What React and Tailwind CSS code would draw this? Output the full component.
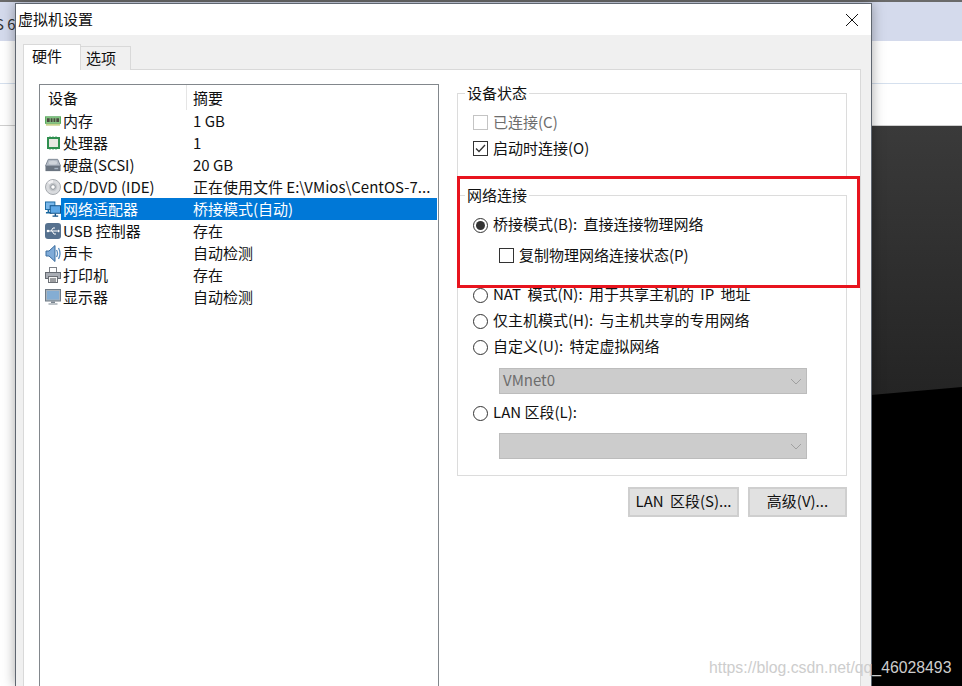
const FONT = { fontFamily: '"Noto Sans CJK SC", "Noto Sans", sans-serif' }

function MemIcon() {
  return (
    <svg width="17" height="10" viewBox="0 0 17 10">
      <rect x="0" y="0" width="17" height="8" fill="#58a85c" />
      <rect x="1" y="1" width="15" height="6" fill="#8cc98a" />
      <path d="M2 2h3v4H2zM6 2h2v4H6zM9 2h2v4H9zM12 2h3v4h-3z" fill="#4a4a3f" />
      <path d="M1 8h15v2H1z" fill="#c6d28a" />
    </svg>
  )
}
function CpuIcon() {
  return (
    <svg width="13" height="14" viewBox="0 0 13 14">
      <rect x="0" y="1" width="13" height="12" fill="#2f8f4f" />
      <rect x="2" y="3" width="9" height="8" fill="#e8e8e2" />
      <path d="M3 0v1M6 0v1M9 0v1M3 13v1M6 13v1M9 13v1" stroke="#6fb186" />
    </svg>
  )
}
function DiskIcon() {
  return (
    <svg width="17" height="14" viewBox="0 0 17 14">
      <path d="M3.500 1h10l3 7H.500z" fill="#b5bcc6" stroke="#7d8794" />
      <ellipse cx="8.500" cy="4.500" rx="4.500" ry="2" fill="#cfd4da" />
      <rect x="0.500" y="8" width="16" height="5.500" fill="#6a7480" />
      <rect x="10" y="10" width="4" height="1.500" fill="#a4b2c0" />
    </svg>
  )
}
function CdIcon() {
  return (
    <svg width="16" height="16" viewBox="0 0 16 16">
      <circle cx="8" cy="8" r="7.500" fill="#d9dbde" stroke="#a6aaaf" />
      <path d="M8 8L2.500 3.500A7 7 0 0 1 8 1z" fill="#f2f2f4" />
      <circle cx="8" cy="8" r="4.200" fill="#c4c7cb" />
      <circle cx="8" cy="8" r="2.300" fill="#fff" stroke="#8f959b" />
    </svg>
  )
}
function NetIcon() {
  return (
    <svg width="17" height="17" viewBox="0 0 17 17">
      <rect x="0.500" y="0.500" width="10" height="8" fill="#79b7ea" stroke="#16669f" />
      <path d="M1 12h6M3.500 9v3" stroke="#16669f" strokeWidth="1.500" />
      <rect x="5.500" y="4.500" width="11" height="8" fill="#5ea8e6" stroke="#0f4f85" />
      <path d="M8 15.500h6M11 13v2" stroke="#0f4f85" strokeWidth="1.500" />
    </svg>
  )
}
function UsbIcon() {
  return (
    <svg width="16" height="16" viewBox="0 0 16 16">
      <rect x="0" y="0" width="16" height="16" rx="3" fill="#56718f" />
      <path d="M2.500 8h11M6 8l2-3h2M7 8l2 3h2" stroke="#fff" fill="none" />
      <circle cx="3" cy="8" r="1.300" fill="#fff" />
      <path d="M13 6.500L15 8l-2 1.500z" fill="#fff" />
    </svg>
  )
}
function SoundIcon() {
  return (
    <svg width="16" height="17" viewBox="0 0 16 17">
      <path d="M1 6h3l6-5.500v16L4 11H1z" fill="#7fabd8" stroke="#3a6c9e" />
      <path d="M11.500 5q2 3.500 0 7M13.500 3q3 5.500 0 11" stroke="#5a8dbf" fill="none" strokeWidth="1.300" />
    </svg>
  )
}
function PrinterIcon() {
  return (
    <svg width="16" height="16" viewBox="0 0 16 16">
      <rect x="4.500" y="0.500" width="7" height="5" fill="#fff" stroke="#7c8087" />
      <rect x="0.500" y="5.500" width="15" height="6" fill="#a9adb4" stroke="#666b72" />
      <rect x="3.500" y="9.500" width="9" height="6" fill="#f4f4f4" stroke="#6c7076" />
      <path d="M5 12h6M5 14h6" stroke="#44484e" />
    </svg>
  )
}
function MonitorIcon() {
  return (
    <svg width="16" height="16" viewBox="0 0 16 16">
      <rect x="0.500" y="0.500" width="15" height="11.500" fill="#a8b3bd" stroke="#6f7a85" />
      <rect x="2" y="2" width="12" height="8.500" fill="#84add3" />
      <path d="M6 12.500h4V14H6zM3.500 14.500h9v1h-9z" fill="#7a8590" />
    </svg>
  )
}

const devices = [
  { Icon: MemIcon, name: '内存', summary: '1 GB' },
  { Icon: CpuIcon, name: '处理器', summary: '1' },
  { Icon: DiskIcon, name: '硬盘(SCSI)', summary: '20 GB' },
  { Icon: CdIcon, name: 'CD/DVD (IDE)', summary: '正在使用文件 E:\\VMios\\CentOS-7...' },
  { Icon: NetIcon, name: '网络适配器', summary: '桥接模式(自动)', selected: true },
  { Icon: UsbIcon, name: 'USB 控制器', summary: '存在' },
  { Icon: SoundIcon, name: '声卡', summary: '自动检测' },
  { Icon: PrinterIcon, name: '打印机', summary: '存在' },
  { Icon: MonitorIcon, name: '显示器', summary: '自动检测' },
]

function Radio({ checked, label, tight }) {
  return (
    <div className="flex h-[26px] items-center gap-[5px] text-[15px] whitespace-nowrap text-[#111]">
      <span className="flex h-[15px] w-[15px] items-center justify-center rounded-full border border-[#333] bg-white">
        {checked && <span className="h-[9px] w-[9px] rounded-full bg-[#333]" />}
      </span>
      <span className={`mb-[2px] ${tight ? '' : '[word-spacing:3px]'}`}>{label}</span>
    </div>
  )
}

function Check({ checked, disabled, label }) {
  return (
    <div className={`flex h-[26px] items-center gap-[5px] text-[15px] whitespace-nowrap ${disabled ? 'text-[#6d6d6d]' : 'text-[#111]'}`}>
      <span className={`flex h-[15px] w-[15px] items-center justify-center border bg-white ${disabled ? 'border-[#c4c4c4]' : 'border-[#333]'}`}>
        {checked && (
          <svg width="11" height="9" viewBox="0 0 11 9">
            <path d="M1 4.500l3 3 6-6.500" stroke="#333" strokeWidth="1.300" fill="none" />
          </svg>
        )}
      </span>
      {label}
    </div>
  )
}

function Select({ value }) {
  return (
    <div className="ml-[41px] flex h-[26px] w-[308px] items-center justify-between border border-[#bcbcbc] bg-[#cccccc] pr-[4px] pl-[3px] text-[15px] text-[#6d6d6d]">
      <span className="mb-[2px]">{value}</span>
      <svg width="12" height="7" viewBox="0 0 12 7">
        <path d="M1 1l5 5 5-5" stroke="#a0a0a0" fill="none" />
      </svg>
    </div>
  )
}

function Group({ title, className, children }) {
  return (
    <div className={`relative border border-[#dcdcdc] ${className}`}>
      <span className="absolute top-[-10px] left-[7px] bg-white px-[2px] text-[15px] leading-[18px] text-[#111]">{title}</span>
      {children}
    </div>
  )
}

export default function App() {
  return (
    <div className="relative h-[686px] w-[962px] overflow-hidden bg-white" style={FONT}>
      {/* desktop behind the dialog */}
      <div className="h-[2px] bg-[#6a6a6a]" />
      <div className="h-[39px] overflow-hidden bg-[#d4daec] pt-[11px] text-[15px] leading-[22px] whitespace-nowrap text-[#333]">
        <span className="-ml-[5px] block">S 6</span>
      </div>
      <div className="h-[43px] border-b border-[#d5e0ee] bg-white" />
      <div className="h-[42px] border-b border-[#cfcfcf] bg-white" />
      <div className="ml-[400px] h-[560px] bg-black">
        <svg className="block" width="562" height="270" viewBox="0 0 562 270">
          <defs>
            <linearGradient id="wall" x1="0" y1="0" x2="0" y2="1">
              <stop offset="0" stopColor="#3a3a3a" />
              <stop offset="1" stopColor="#242424" />
            </linearGradient>
          </defs>
          <path d="M0 0H562V261L471 269H0Z" fill="url(#wall)" />
        </svg>
      </div>

      {/* dialog */}
      <div className="absolute top-[3px] left-[15px] flex h-[683px] w-[857px] flex-col border-t border-r border-l border-[#5f6670] bg-[#f0f0f0] shadow-[0_0_12px_rgba(0,0,0,0.35)]">
        <div className="flex h-[31px] items-center justify-between bg-white pr-[12px] pl-[2px] text-[15px] text-[#111]">
          <span>虚拟机设置</span>
          <svg width="14" height="14" viewBox="0 0 14 14">
            <path d="M1 1l12 12M13 1L1 13" stroke="#111" strokeWidth="1" />
          </svg>
        </div>

        <div className="flex flex-1 flex-col pt-[9px] pr-[10px] pl-[7px]">
          <div className="relative z-10 flex h-[26px] items-end text-[15px] text-[#111]">
            <div className="flex h-[26px] w-[58px] items-center border-x border-t border-[#d9d9d9] bg-white pb-[2px] pl-[8px]">硬件</div>
            <div className="flex h-[24px] w-[50px] items-center border-t border-r border-[#d9d9d9] bg-[#f0f0f0] pl-[5px]">选项</div>
          </div>

          <div className="-mt-px flex flex-1 gap-[18px] border-t border-r border-l border-[#d9d9d9] bg-white pt-[14px] pr-[13px] pl-[15px]">
            {/* device list */}
            <div className="flex w-[400px] flex-col border-t border-r border-l border-[#82878c] text-[15px] text-[#111]">
              <div className="flex h-[25px] items-center">
                <span className="flex h-[25px] w-[147px] items-center border-r border-[#e5e5e5] pt-[2px] pl-[8px]">设备</span>
                <span className="pt-[2px] pl-[6px]">摘要</span>
              </div>
              {devices.map(({ Icon, name, summary, selected }) => (
                <div key={name} className="flex h-[22px] items-center">
                  <span className="flex w-[21px] shrink-0 justify-center pl-[5px]"><Icon /></span>
                  <div className={`mr-px flex h-[22px] flex-1 items-center ${selected ? 'bg-[#0078d7] text-white' : ''}`}>
                    <span className="w-[132px] pl-[2px] whitespace-nowrap">{name}</span>
                    <span className="whitespace-nowrap">{summary}</span>
                  </div>
                </div>
              ))}
            </div>

            {/* settings */}
            <div className="flex flex-1 flex-col pt-[9px]">
              <Group title="设备状态" className="h-[85px] pt-[15px] pl-[15px]">
                <Check disabled label="已连接(C)" />
                <Check checked label="启动时连接(O)" />
              </Group>
              <Group title="网络连接" className="mt-[17px] h-[281px] pt-[16px] pl-[15px]">
                <Radio checked label="桥接模式(B): 直接连接物理网络" />
                <div className="mt-[4px] mb-[14px] pl-[26px]">
                  <Check label="复制物理网络连接状态(P)" />
                </div>
                <Radio label="NAT 模式(N): 用于共享主机的 IP 地址" />
                <Radio label="仅主机模式(H): 与主机共享的专用网络" />
                <Radio label="自定义(U): 特定虚拟网络" />
                <div className="-ml-[15px] pt-[8px]"><Select value="VMnet0" /></div>
                <div className="mt-[6px]"><Radio tight label="LAN 区段(L):" /></div>
                <div className="-ml-[15px] pt-[7px]"><Select value="" /></div>
              </Group>
              <div className="mt-[11px] flex justify-end gap-[9px] text-[15px] text-[#111]">
                <button className="h-[30px] w-[111px] border-2 border-[#cfcfcf] bg-[#e1e1e1] pb-[2px] [word-spacing:3px]">LAN 区段(S)...</button>
                <button className="h-[30px] w-[99px] border-2 border-[#cfcfcf] bg-[#e1e1e1] pb-[2px]">高级(V)...</button>
              </div>
            </div>
          </div>
        </div>
      </div>

      {/* red annotation box */}
      <div className="absolute top-[176px] left-[457px] h-[112px] w-[403px] border-[3px] border-[#e8141e]" />

      {/* watermark */}
      <span className="absolute top-[658px] left-[709px] text-[15.8px] leading-[20px] whitespace-nowrap text-[#cdcdcd]" style={{ fontFamily: '"Liberation Sans", sans-serif' }}>https://blog.csdn.net/qq_46028493</span>
    </div>
  )
}
